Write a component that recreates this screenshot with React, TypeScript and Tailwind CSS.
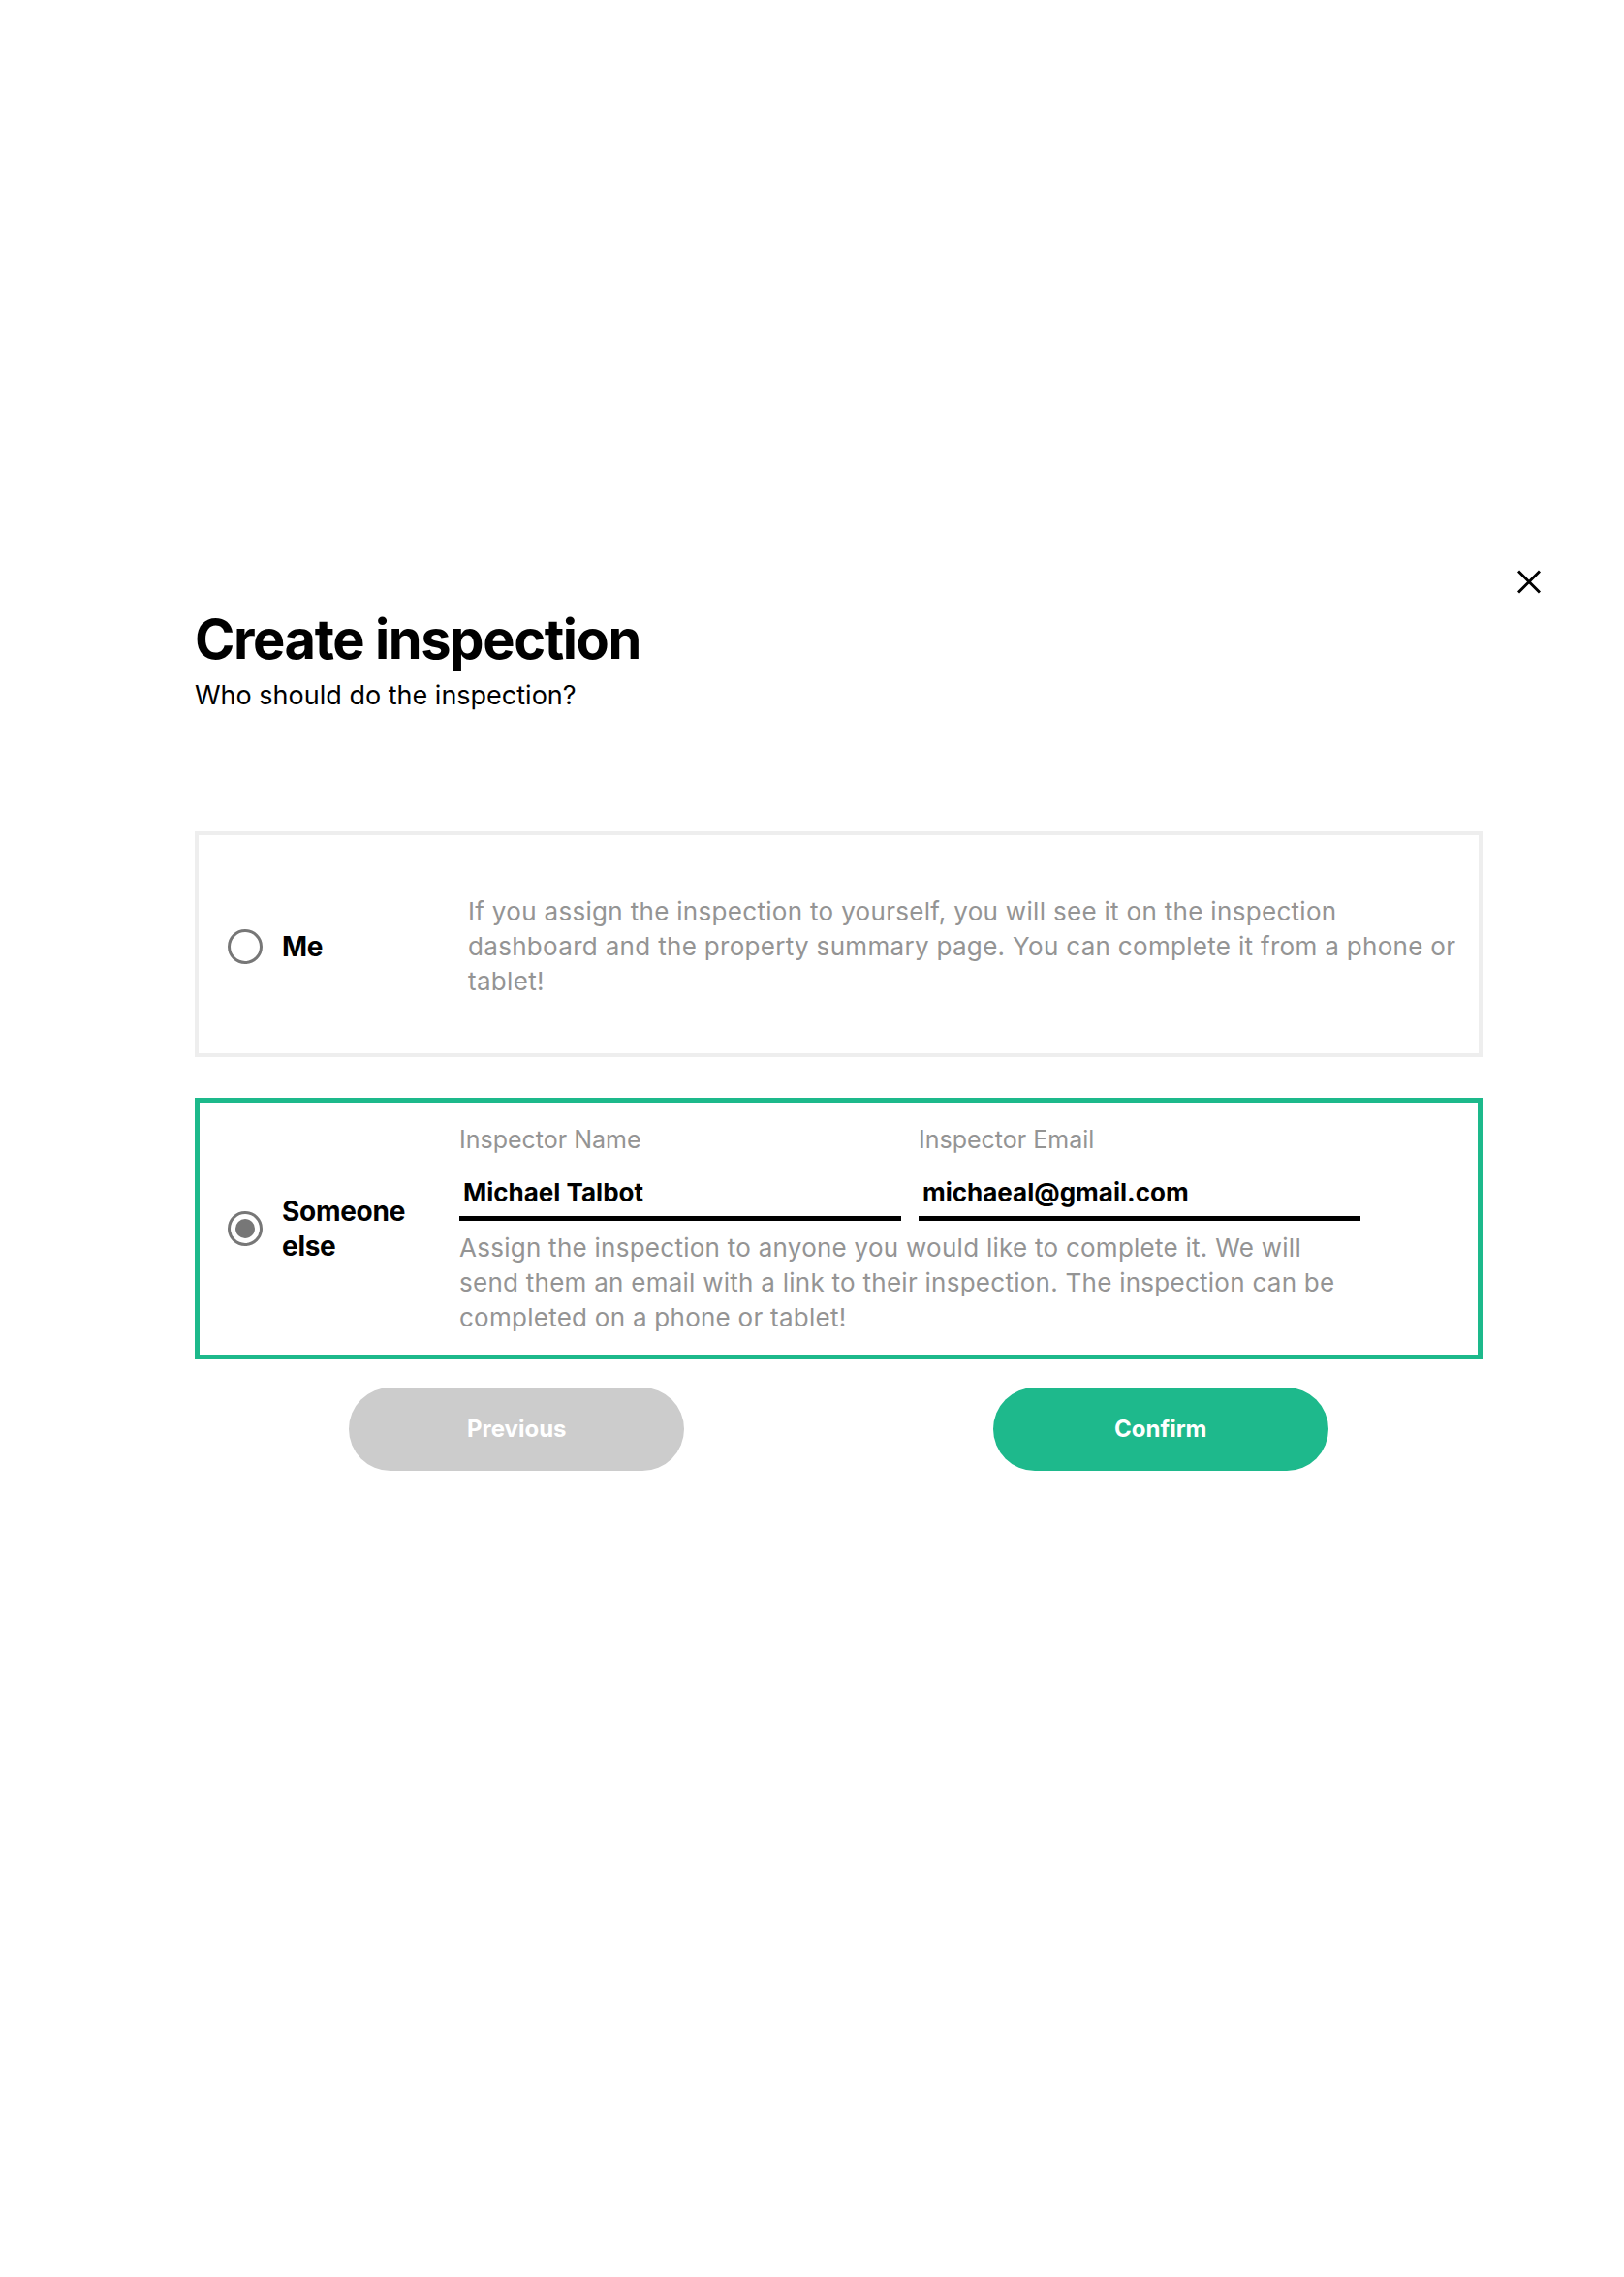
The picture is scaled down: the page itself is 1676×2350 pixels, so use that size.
import { useState } from "react";

const font = { fontFamily: "Inter, 'Noto Sans', sans-serif" };

function Radio({ checked }: { checked: boolean }) {
  return (
    <span className="flex h-9 w-9 shrink-0 items-center justify-center rounded-full border-[3.5px] border-[#777777]">
      {checked && <span className="h-5 w-5 rounded-full bg-[#777777]" />}
    </span>
  );
}

export default function App() {
  const [assignee, setAssignee] = useState<"me" | "other">("other");

  return (
    <div className="min-h-[2350px] w-full bg-white text-black" style={font}>
      {/* Close */}
      <div className="flex justify-end pr-[86px] pt-[588px]">
        <button aria-label="Close" className="h-[25px] w-[24px]">
          <svg viewBox="0 0 24 25" width="24" height="25" fill="none" stroke="#000" strokeWidth="3">
            <path d="M1 1.5 23 23.5M23 1.5 1 23.5" />
          </svg>
        </button>
      </div>

      <div className="ml-[201px] mt-[11px] w-[1329px]">
        <h1 className="text-[56px] font-bold leading-[72px] tracking-[-0.025em]">Create inspection</h1>
        <p className="mt-[4px] text-[27px] leading-[36px]">Who should do the inspection?</p>

        {/* Option: me */}
        <div
          onClick={() => setAssignee("me")}
          className={
            assignee === "me"
              ? "mt-[122px] flex cursor-pointer items-center border-[5px] border-[#1db98b] pb-[55px] pt-[60px]"
              : "mt-[122px] flex cursor-pointer items-center border-4 border-[#eeeeee] pb-[56px] pt-[61px]"
          }
        >
          <div className="flex w-[278px] shrink-0 items-center gap-[20px] pl-[30px]">
            <Radio checked={assignee === "me"} />
            <span className="text-[28px] font-bold leading-[36px] tracking-[-0.01em]">Me</span>
          </div>
          <p className="flex-1 pr-[8px] text-[26px] leading-[36px] tracking-[0.012em] text-[#949494]">
            If you assign the inspection to yourself, you will see it on the inspection
            <br />
            dashboard and the property summary page. You can complete it from a phone or
            <br />
            tablet!
          </p>
        </div>

        {/* Option: someone else */}
        <div
          onClick={() => setAssignee("other")}
          className={
            assignee === "other"
              ? "mt-[42px] flex cursor-pointer items-center border-[5px] border-[#1db98b] pb-[20px] pt-[20px]"
              : "mt-[42px] flex cursor-pointer items-center border-4 border-[#eeeeee] pb-[21px] pt-[21px]"
          }
        >
          <div className="flex w-[268px] shrink-0 items-center gap-[20px] pl-[29px]">
            <Radio checked={assignee === "other"} />
            <span className="text-[28px] font-bold leading-[36px] tracking-[-0.01em]">
              Someone
              <br />
              else
            </span>
          </div>
          <div className="w-[930px]">
            <div className="grid grid-cols-2 gap-[18px]">
              <label className="block">
                <span className="block text-[25px] leading-[36px] text-[#949494]">Inspector Name</span>
                <span className="mt-[19px] block border-b-[5px] border-black pb-[6px] pl-[4px] text-[26px] font-bold leading-[36px]">
                  Michael Talbot
                </span>
              </label>
              <label className="block">
                <span className="block text-[25px] leading-[36px] text-[#949494]">Inspector Email</span>
                <span className="mt-[19px] block border-b-[5px] border-black pb-[6px] pl-[4px] text-[26px] font-bold leading-[36px]">
                  michaeal@gmail.com
                </span>
              </label>
            </div>
            <p className="mt-[10px] whitespace-nowrap text-[26px] leading-[36px] tracking-[0.01em] text-[#949494]">
              Assign the inspection to anyone you would like to complete it. We will
              <br />
              send them an email with a link to their inspection. The inspection can be
              <br />
              completed on a phone or tablet!
            </p>
          </div>
        </div>

        {/* Actions */}
        <div className="mt-[29px] grid grid-cols-2">
          <div className="flex justify-center">
            <button className="h-[86px] w-[346px] rounded-full bg-[#cccccc] text-[24px] font-bold text-white">
              Previous
            </button>
          </div>
          <div className="flex justify-center">
            <button className="h-[86px] w-[346px] rounded-full bg-[#1eb98c] text-[24px] font-bold text-white">
              Confirm
            </button>
          </div>
        </div>
      </div>
    </div>
  );
}
